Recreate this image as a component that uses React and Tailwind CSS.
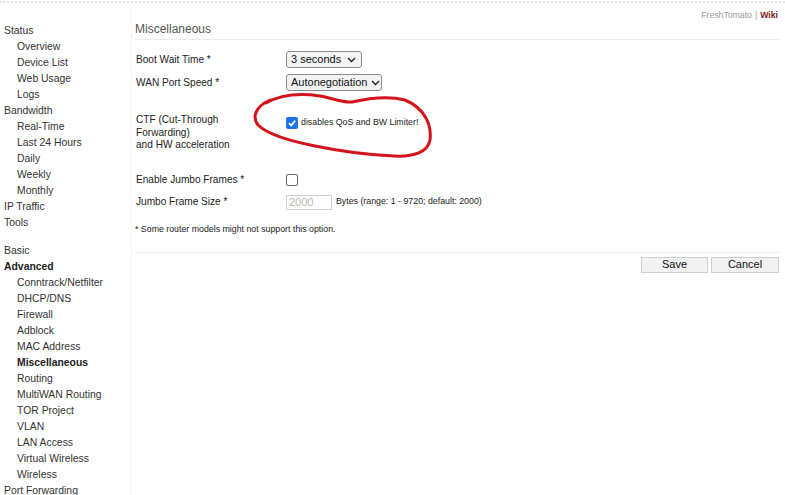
import React from "react";

const nav = [
  { t: "Status", lvl: 0 },
  { t: "Overview", lvl: 1 },
  { t: "Device List", lvl: 1 },
  { t: "Web Usage", lvl: 1 },
  { t: "Logs", lvl: 1 },
  { t: "Bandwidth", lvl: 0 },
  { t: "Real-Time", lvl: 1 },
  { t: "Last 24 Hours", lvl: 1 },
  { t: "Daily", lvl: 1 },
  { t: "Weekly", lvl: 1 },
  { t: "Monthly", lvl: 1 },
  { t: "IP Traffic", lvl: 0 },
  { t: "Tools", lvl: 0, gapAfter: true },
  { t: "Basic", lvl: 0 },
  { t: "Advanced", lvl: 0, bold: true },
  { t: "Conntrack/Netfilter", lvl: 1 },
  { t: "DHCP/DNS", lvl: 1 },
  { t: "Firewall", lvl: 1 },
  { t: "Adblock", lvl: 1 },
  { t: "MAC Address", lvl: 1 },
  { t: "Miscellaneous", lvl: 1, bold: true },
  { t: "Routing", lvl: 1 },
  { t: "MultiWAN Routing", lvl: 1 },
  { t: "TOR Project", lvl: 1 },
  { t: "VLAN", lvl: 1 },
  { t: "LAN Access", lvl: 1 },
  { t: "Virtual Wireless", lvl: 1 },
  { t: "Wireless", lvl: 1 },
  { t: "Port Forwarding", lvl: 0 },
];

function Chevron() {
  return (
    <svg width="9" height="6" viewBox="0 0 9 6" className="shrink-0 ml-[4px]">
      <path d="M1 1 L4.5 4.5 L8 1" fill="none" stroke="#222" strokeWidth="1.4" />
    </svg>
  );
}

function FakeSelect({ value, w }) {
  return (
    <div
      className={`flex items-center justify-between h-[17px] ${w} rounded-[3px] border border-[#8a8a8a] bg-[#f3f3f3] pl-[4px] pr-[5px] text-[11px] leading-none text-[#111]`}
    >
      <span className="whitespace-nowrap">{value}</span>
      <Chevron />
    </div>
  );
}

export default function App() {
  return (
    <div
      className="relative w-[785px] h-[495px] overflow-hidden bg-white text-[#333]"
      style={{ fontFamily: '"Liberation Sans", Arial, sans-serif' }}
    >
      <div className="h-[6px] border-t-[2px] border-dotted border-[#e2e2e2] mt-[1px]" />
      <div className="flex">
        <div className="w-[132px] shrink-0 pt-[16px] border-r border-[#f5f5f5] h-[500px]">
          {nav.map((n) => (
            <div
              key={n.t}
              className={`leading-[16px] text-[10.4px] whitespace-nowrap ${
                n.lvl ? "pl-[17px]" : "pl-[4px]"
              } ${n.bold ? "font-bold text-[#222]" : ""} ${n.gapAfter ? "mb-[12px]" : ""}`}
            >
              {n.t}
            </div>
          ))}
        </div>
        <div className="flex-1 pl-[3px] pr-[5px] pt-[2px]">
          <div className="flex justify-end h-[12px] leading-[12px] text-[8.7px] text-[#9a9a9a] pr-[2px]">
            FreshTomato <span className="mx-[3px]">|</span>
            <span className="font-bold text-[#7a1a1a]">Wiki</span>
          </div>
          <div className="mt-[1px] text-[12px] leading-[14px] text-[#555] pb-[3px] border-b border-[#ececec]">
            Miscellaneous
          </div>

          <div className="pl-[1px] text-[10.1px] text-[#222]">
            <div className="flex items-center mt-[11px] h-[17px]">
              <div className="w-[150px]">Boot Wait Time *</div>
              <FakeSelect value="3 seconds" w="w-[76px]" />
            </div>
            <div className="flex items-center mt-[6px] h-[17px]">
              <div className="w-[150px]">WAN Port Speed *</div>
              <FakeSelect value="Autonegotiation" w="w-[96px]" />
            </div>
            <div className="flex items-start mt-[23px]">
              <div className="w-[150px] leading-[12.5px]">
                CTF (Cut-Through
                <br />
                Forwarding)
                <br />
                and HW acceleration
              </div>
              <div className="flex items-center mt-[2px]">
                <div className="w-[12px] h-[12px] rounded-[2px] bg-[#1a73e8] flex items-center justify-center">
                  <svg width="10" height="10" viewBox="0 0 10 10">
                    <path d="M2 5.2 L4.2 7.4 L8.2 2.6" fill="none" stroke="white" strokeWidth="1.8" />
                  </svg>
                </div>
                <span className="ml-[3px] text-[8.8px] text-[#222]">disables QoS and BW Limiter!</span>
              </div>
            </div>
            <div className="flex items-center mt-[22px] h-[12px]">
              <div className="w-[150px]">Enable Jumbo Frames *</div>
              <div className="w-[12px] h-[12px] rounded-[2px] border border-[#666] bg-white" />
            </div>
            <div className="flex items-center mt-[9px] h-[15px]">
              <div className="w-[150px]">Jumbo Frame Size *</div>
              <div className="w-[46px] h-[15px] border border-[#cfcfcf] text-[11px] leading-[13px] pl-[2px] text-[#b5b5b5]">
                2000
              </div>
              <span className="ml-[4px] text-[8.8px] text-[#222]">
                Bytes (range: 1 - 9720; default: 2000)
              </span>
            </div>
          </div>
          <div className="mt-[14px] text-[8.8px] leading-[11px] text-[#222]">
            * Some router models might not support this option.
          </div>
          <div className="mt-[17px] border-t border-[#eeeeee]" />
          <div className="flex justify-end gap-[3px] mt-[4px] pr-[1px]">
            <button className="w-[67px] h-[16px] bg-[#f2f2f2] border border-[#cfcfcf] text-[11px] leading-none text-[#111]">
              Save
            </button>
            <button className="w-[68px] h-[16px] bg-[#f2f2f2] border border-[#cfcfcf] text-[11px] leading-none text-[#111]">
              Cancel
            </button>
          </div>
        </div>
      </div>
      <svg
        className="absolute left-0 top-0 pointer-events-none"
        width="785"
        height="495"
        viewBox="0 0 785 495"
      >
        <path
          d="M 266 103 C 280 95, 300 93, 320 96 C 335 99, 344 103, 352 102 C 365 99, 386 95, 405 100 C 424 108, 432 124, 430 140 C 428 152, 414 157, 394 156 C 370 155, 344 152, 315 146 C 290 141, 268 135, 258 125 C 252 117, 255 107, 270 100"
          fill="none"
          stroke="#d3141c"
          strokeWidth="3"
          strokeLinecap="round"
        />
      </svg>
    </div>
  );
}
